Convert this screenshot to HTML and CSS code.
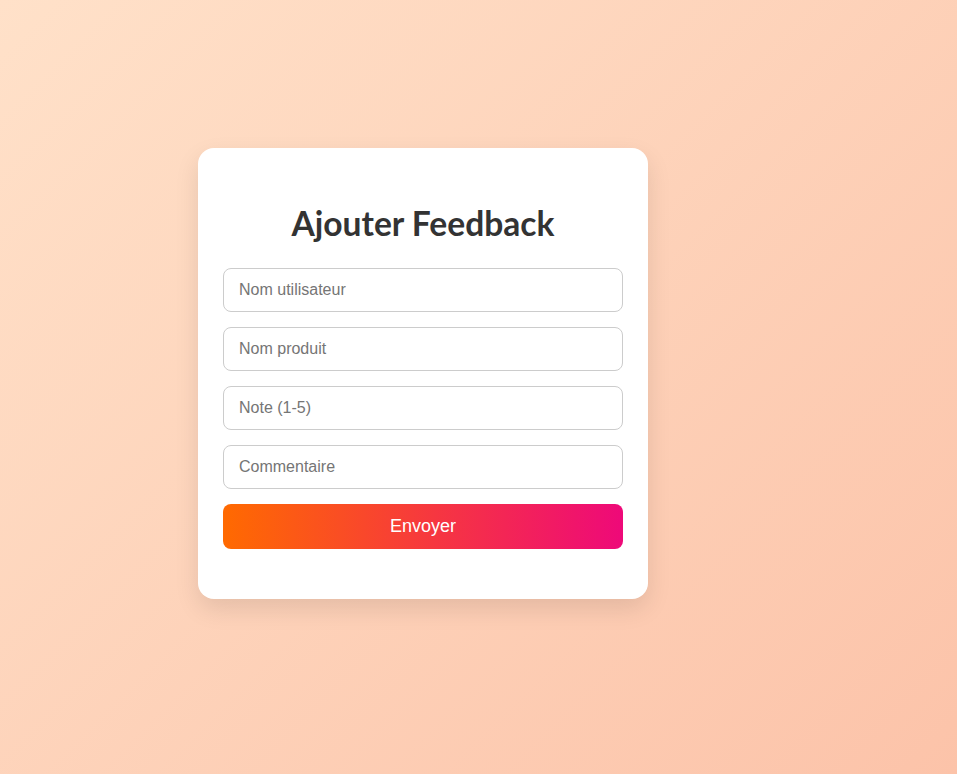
FILE: index.html
```html
<!DOCTYPE html>
<html lang="fr">
<head>
<meta charset="utf-8">
<title>Ajouter Feedback</title>
<link rel="stylesheet" href="styles.css">
</head>
<body>
<div class="card">
  <h2 class="title">Ajouter Feedback</h2>
  <form class="form">
    <input class="field" type="text" placeholder="Nom utilisateur">
    <input class="field" type="text" placeholder="Nom produit">
    <input class="field" type="text" placeholder="Note (1-5)">
    <input class="field" type="text" placeholder="Commentaire">
    <button class="submit" type="button">Envoyer</button>
  </form>
</div>
</body>
</html>
```
FILE: styles.css
```css
html, body {
  height: 100%;
}
body {
  margin: 0;
  box-sizing: border-box;
  padding: 148px 0 0 198px;
  background: linear-gradient(135deg, #ffe1c9 0%, #fcc3a9 100%);
  font-family: "Liberation Sans", Arial, sans-serif;
}
.card {
  width: 450px;
  box-sizing: border-box;
  background: #fff;
  border-radius: 16px;
  padding: 50px 25px 50px;
  box-shadow: 0 10px 25px rgba(0, 0, 0, 0.1);
}
.title {
  margin: 0 0 20px;
  text-align: center;
  font-family: Lato, "Open Sans", sans-serif;
  font-weight: 700;
  font-size: 33.6px;
  line-height: 50px;
  color: #333;
}
.form {
  display: flex;
  flex-direction: column;
  gap: 15px;
}
.field {
  box-sizing: border-box;
  width: 100%;
  height: 44px;
  padding: 0 15px;
  border: 1px solid #ccc;
  border-radius: 8px;
  font-family: "Liberation Sans", Arial, sans-serif;
  font-size: 16px;
  color: #333;
  background: #fff;
  outline: none;
}
.field::placeholder {
  color: #757575;
}
.submit {
  height: 45px;
  border: none;
  border-radius: 8px;
  background: linear-gradient(90deg, #ff6a00 0%, #ee0979 100%);
  color: #fff;
  font-family: "Liberation Sans", Arial, sans-serif;
  font-size: 18px;
  cursor: pointer;
}
```
